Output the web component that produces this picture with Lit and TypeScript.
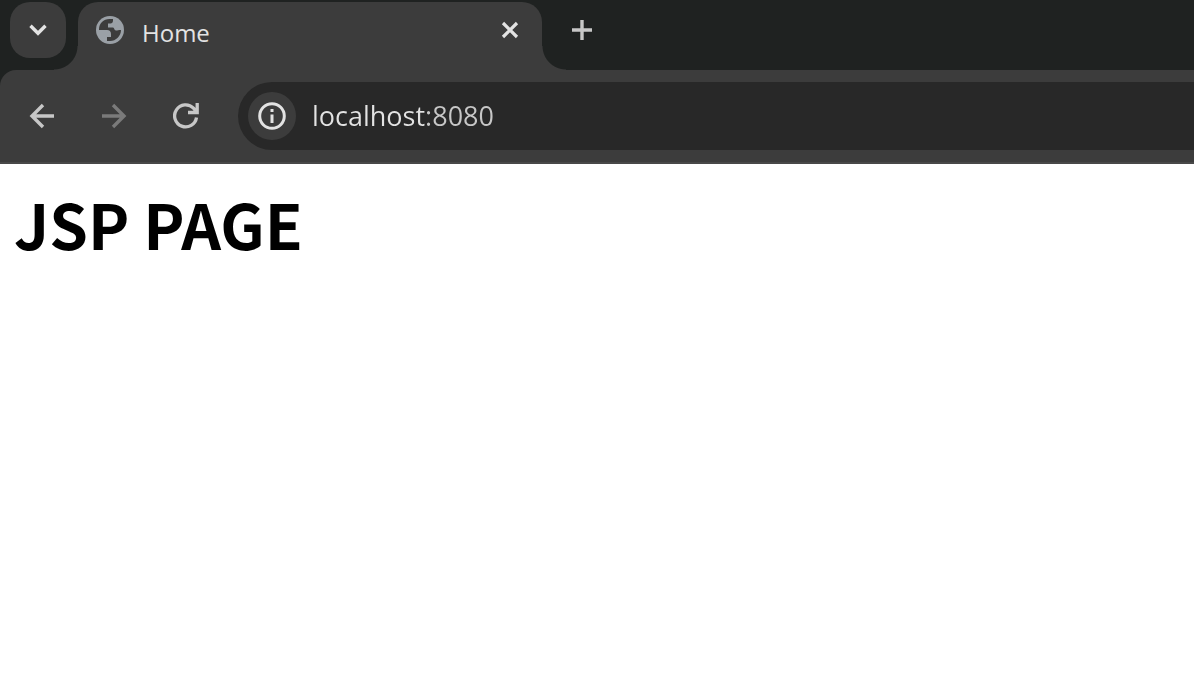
import { LitElement, html, css } from "lit";
import { customElement } from "lit/decorators.js";

@customElement("app-root")
export class AppRoot extends LitElement {
  static styles = css`
    :host {
      display: flex;
      flex-direction: column;
      min-height: 100vh;
      background: #fff;
      font-family: "Open Sans", "Noto Sans", sans-serif;
    }
    button {
      display: grid;
      place-items: center;
      flex: none;
      padding: 0;
      border: 0;
      background: none;
      color: #c7c7c7;
    }
    svg {
      display: block;
      flex: none;
    }
    .strip {
      display: flex;
      align-items: flex-start;
      gap: 12px;
      height: 68px;
      padding: 2px 10px 0;
      background: #1f2221;
    }
    .search {
      width: 56px;
      height: 56px;
      border-radius: 20px;
      background: #3c3c3c;
      color: #e3e3e3;
    }
    .tab {
      position: relative;
      display: flex;
      align-items: center;
      box-sizing: border-box;
      flex: 0 1 464px;
      height: 68px;
      padding: 0 16px 12px;
      gap: 16px;
      border-radius: 20px 20px 0 0;
      background: #3c3c3c;
      color: #e3e3e3;
    }
    .tab::before,
    .tab::after {
      content: "";
      position: absolute;
      bottom: 0;
      width: 24px;
      height: 24px;
    }
    .tab::before {
      right: 100%;
      background: radial-gradient(circle at 0 0, transparent 23px, #3c3c3c 24px);
    }
    .tab::after {
      left: 100%;
      background: radial-gradient(circle at 100% 0, transparent 23px, #3c3c3c 24px);
    }
    .title {
      flex: 1;
      padding-top: 6px;
      font-size: 24px;
      line-height: 32px;
    }
    .close {
      width: 32px;
      height: 32px;
      color: #e3e3e3;
    }
    .new {
      width: 56px;
      height: 56px;
    }
    .frame {
      background: #1f2221;
    }
    .toolbar {
      display: flex;
      align-items: center;
      gap: 16px;
      padding: 12px 0 12px 14px;
      border-bottom: 2px solid #484848;
      border-top-left-radius: 16px;
      background: #3c3c3c;
    }
    .nav {
      width: 56px;
      height: 56px;
    }
    .nav:disabled {
      color: #7a7a7a;
    }
    .address {
      display: flex;
      align-items: center;
      flex: 1;
      gap: 16px;
      height: 68px;
      margin-left: 8px;
      padding-left: 10px;
      border-radius: 34px 0 0 34px;
      background: #282828;
    }
    .info {
      width: 48px;
      height: 48px;
      border-radius: 50%;
      background: #3c3c3c;
      color: #e3e3e3;
    }
    .url {
      flex: 1;
      min-width: 0;
      padding: 0;
      border: 0;
      outline: 0;
      background: linear-gradient(90deg, #e3e3e3 113px, #c7c7c7 113px);
      background-clip: text;
      color: transparent;
      font: 27px/36px "Open Sans", "Noto Sans", sans-serif;
    }
    main {
      padding: 16px 14px;
    }
    h1 {
      margin: 0;
      color: #000;
      font: 700 62px/86px "Noto Sans CJK KR", sans-serif;
    }
  `;

  render() {
    return html`
      <header>
        <div class="strip">
          <button class="search" aria-label="Search tabs">
            <svg width="20" height="20" viewBox="0 0 20 20" fill="none" stroke="currentColor" stroke-width="3.4"><path d="M2.500 5.800 10 13.300l7.500-7.500" /></svg>
          </button>
          <div class="tab">
            <svg width="32" height="32" viewBox="0 0 32 32">
              <circle cx="16" cy="16" r="14" fill="#9aa0a6" />
              <path fill="#3c3c3c" d="M5 15.500C5 9.500 9.500 5 15.500 5H19v1.500c0 2-1 3-2.500 3H14v4h5c1.500 0 1 3 3 3 1.500 0 2.500-.5 5-.5 0 6-5 11-11 11h-3v-4h4v-3c0-2.500-1.500-4-4-4H5z" />
            </svg>
            <span class="title">Home</span>
            <button class="close" aria-label="Close tab">
              <svg width="20" height="20" viewBox="0 0 20 20" stroke="currentColor" stroke-width="3.2"><path d="m3 3 14 14M17 3 3 17" /></svg>
            </button>
          </div>
          <button class="new" aria-label="New tab">
            <svg width="20" height="20" viewBox="0 0 20 20" stroke="currentColor" stroke-width="3.4"><path d="M10 0v20M0 10h20" /></svg>
          </button>
        </div>
        <div class="frame">
          <div class="toolbar">
            <button class="nav" aria-label="Back">
              <svg width="26" height="26" viewBox="0 0 26 26" fill="none" stroke="currentColor" stroke-width="3.4"><path d="M25 13H3M14 2 3 13l11 11" /></svg>
            </button>
            <button class="nav" aria-label="Forward" disabled>
              <svg width="26" height="26" viewBox="0 0 26 26" fill="none" stroke="currentColor" stroke-width="3.4"><path d="M1 13h22M12 2l11 11-11 11" /></svg>
            </button>
            <button class="nav" aria-label="Reload">
              <svg width="26" height="26" viewBox="0 0 26 26" fill="none" stroke="currentColor" stroke-width="3.3"><path d="M23.500 14.500A11 11 0 1 1 20.500 5.200l3 3.500M24.200 0v9.500H15" /></svg>
            </button>
            <div class="address">
              <button class="info" aria-label="View site information">
                <svg width="28" height="28" viewBox="0 0 28 28" fill="none" stroke="currentColor" stroke-width="3"><circle cx="14" cy="14" r="12.300" /><path d="M14 12.500V21M14 7v3" /></svg>
              </button>
              <input class="url" type="text" aria-label="Address" value="localhost:8080" spellcheck="false" />
            </div>
          </div>
        </div>
      </header>
      <main><h1>JSP PAGE</h1></main>
    `;
  }
}
